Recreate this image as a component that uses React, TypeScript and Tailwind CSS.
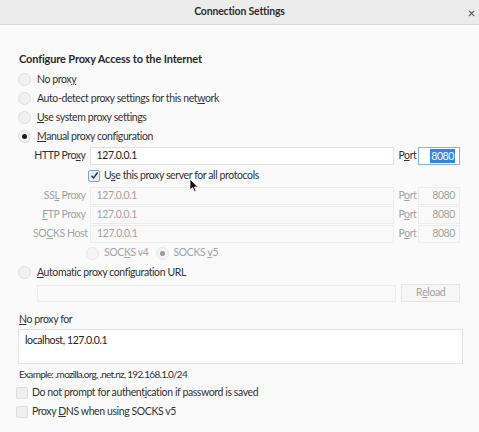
import React from "react";

const font = { fontFamily: 'Lato, "Open Sans", sans-serif' };

function Radio({ checked, disabled }: { checked?: boolean; disabled?: boolean }) {
  return (
    <span
      className={`inline-flex items-center justify-center w-[13px] h-[13px] rounded-full border shrink-0 ${
        disabled ? "border-[#e6e6e6] bg-[#f4f4f4]" : "border-[#dcdcdc] bg-[#f1f1f1]"
      }`}
    >
      {checked && (
        <span className={`w-[5px] h-[5px] rounded-full ${disabled ? "bg-[#9a9a9a]" : "bg-[#1c1c1c]"}`}></span>
      )}
    </span>
  );
}

function Check({ checked }: { checked?: boolean }) {
  return (
    <span
      className={`inline-flex items-center justify-center w-[12px] h-[12px] rounded-[2px] border shrink-0 ${
        checked ? "border-[#7fa2cf] bg-[#e4ecf6]" : "border-[#dcdcdc] bg-[#efefef]"
      }`}
    >
      {checked && (
        <svg width="9" height="9" viewBox="0 0 9 9">
          <path d="M1.5 4.8 L3.6 7 L7.6 1.5" fill="none" stroke="#333" strokeWidth="1.4" />
        </svg>
      )}
    </span>
  );
}

function ProxyRow({
  label,
  value,
  port,
  active,
}: {
  label: React.ReactNode;
  value: string;
  port: string;
  active?: boolean;
}) {
  const txt = active ? "text-[#333]" : "text-[#a3a3a3]";
  return (
    <div className="flex items-center h-[19px] whitespace-nowrap">
      <div className={`w-[57px] text-right pr-[4px] ${txt}`}>{label}</div>
      <div
        className={`w-[307px] h-[18px] border flex items-center px-[6px] ${
          active ? "bg-white border-[#e2e2e2] text-[#222]" : "bg-[#f9f9f9] border-[#ececec] text-[#a3a3a3]"
        }`}
      >
        {value}
      </div>
      <div className={`w-[24px] pl-[4px] ${txt}`}>
        P<u>o</u>rt
      </div>
      <div
        className={`w-[42px] h-[18px] border flex items-center justify-end pr-[4px] ${
          active ? "bg-white border-[#86b1e3] text-[#222]" : "bg-[#f9f9f9] border-[#ececec] text-[#a3a3a3]"
        }`}
      >
        {active ? <span className="bg-[#3584e4] text-white px-[1px] leading-[14px]">{port}</span> : port}
      </div>
    </div>
  );
}

export default function App() {
  return (
    <div
      className="w-[479px] h-[432px] bg-[#fafafa] text-[10.5px] tracking-[-0.4px] text-[#333] overflow-hidden relative whitespace-nowrap"
      style={font}
    >
      <div className="h-[25px] bg-[#ececec] border-b border-[#d9d9d9] flex items-center justify-center relative">
        <span className="font-bold text-[#2e2e2e] text-[10.5px] tracking-[-0.2px]">Connection Settings</span>
        <span className="absolute right-[4px] top-[4px] text-[13px] text-[#444]">×</span>
      </div>

      <div className="px-[19px] pt-[26px]">
        <div className="font-bold text-[11px] tracking-[-0.15px] text-[#2a2a2a] leading-[16px]">
          Configure Proxy Access to the Internet
        </div>

        <div className="flex flex-col mt-[3px] -ml-[1px]">
          <div className="flex items-center gap-[6px] h-[19px]">
            <Radio />
            <span>
              No prox<u>y</u>
            </span>
          </div>
          <div className="flex items-center gap-[6px] h-[19px]">
            <Radio />
            <span>
              Auto-detect proxy settings for this net<u>w</u>ork
            </span>
          </div>
          <div className="flex items-center gap-[6px] h-[19px]">
            <Radio />
            <span>
              <u>U</u>se system proxy settings
            </span>
          </div>
          <div className="flex items-center gap-[6px] h-[19px]">
            <Radio checked />
            <span>
              <u>M</u>anual proxy configuration
            </span>
          </div>
        </div>

        <div className="ml-[14px] flex flex-col">
          <ProxyRow
            active
            label={
              <>
                HTTP Pro<u>x</u>y
              </>
            }
            value="127.0.0.1"
            port="8080"
          />
          <div className="flex items-center h-[21px] pl-[55px] gap-[4px]">
            <Check checked />
            <span>
              U<u>s</u>e this proxy server for all protocols
            </span>
          </div>
          <ProxyRow
            label={
              <>
                SS<u>L</u> Proxy
              </>
            }
            value="127.0.0.1"
            port="8080"
          />
          <ProxyRow
            label={
              <>
                <u>F</u>TP Proxy
              </>
            }
            value="127.0.0.1"
            port="8080"
          />
          <ProxyRow
            label={
              <>
                SO<u>C</u>KS Host
              </>
            }
            value="127.0.0.1"
            port="8080"
          />
          <div className="flex items-center h-[20px] pl-[53px] text-[#a3a3a3]">
            <Radio disabled />
            <span className="ml-[5px]">
              SOC<u>K</u>S v4
            </span>
            <span className="ml-[7px] flex">
              <Radio checked disabled />
            </span>
            <span className="ml-[5px]">
              SOCKS <u>v</u>5
            </span>
          </div>
        </div>

        <div className="flex items-center gap-[6px] h-[19px] -ml-[1px]">
          <Radio />
          <span>
            <u>A</u>utomatic proxy configuration URL
          </span>
        </div>
        <div className="flex items-center mt-[2px] ml-[18px] gap-[5px]">
          <div className="w-[361px] h-[17px] border border-[#ececec] bg-[#f9f9f9]"></div>
          <div className="w-[59px] h-[18px] border border-[#e6e6e6] bg-[#f6f6f6] text-[#a3a3a3] flex items-center justify-center">
            R<u>e</u>load
          </div>
        </div>

        <div className="mt-[9px] leading-[16px]">
          <u>N</u>o proxy for
        </div>
        <div className="mt-[2px] h-[35px] w-[445px] -ml-[1px] border border-[#e2e2e2] bg-white px-[6px] pt-[3px] text-[#222]">
          localhost, 127.0.0.1
        </div>
        <div className="mt-[2px] leading-[16px] text-[10px] tracking-[-0.7px]">
          Example: .mozilla.org, .net.nz, 192.168.1.0/24
        </div>
        <div className="flex items-center gap-[4px] h-[19px] mt-[1px] -ml-[3px]">
          <Check />
          <span>
            Do not prompt for authent<u>i</u>cation if password is saved
          </span>
        </div>
        <div className="flex items-center gap-[4px] h-[19px] -ml-[3px]">
          <Check />
          <span>
            Proxy <u>D</u>NS when using SOCKS v5
          </span>
        </div>
      </div>

      <svg className="absolute left-[189px] top-[178px]" width="10" height="15" viewBox="0 0 10 15">
        <path d="M1 1 L1 12 L3.6 9.6 L5.6 13.8 L7.2 13 L5.3 9 L8.8 9 Z" fill="#111" stroke="#fff" strokeWidth="0.8" />
      </svg>
    </div>
  );
}
